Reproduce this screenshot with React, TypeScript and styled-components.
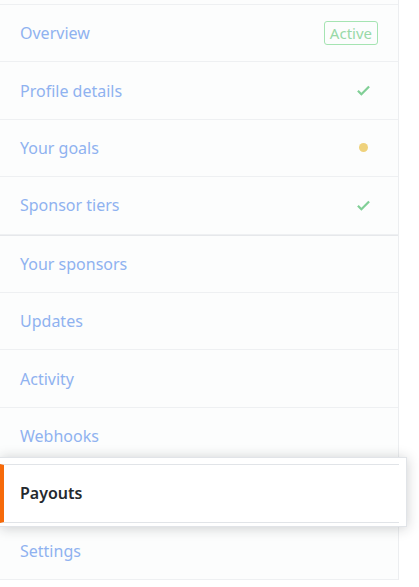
import React from 'react';
import styled, { createGlobalStyle } from 'styled-components';

const GlobalStyle = createGlobalStyle`
  html, body {
    margin: 0;
    padding: 0;
    background: #ffffff;
  }
  body {
    font-family: "Noto Sans", "Open Sans", sans-serif;
  }
`;

const Page = styled.div`
  width: 419px;
  height: 587px;
  overflow: hidden;
  background: #ffffff;
`;

const Nav = styled.nav`
  width: 398px;
  padding-top: 4px;
  background: #fcfdfd;
  border-right: 1px solid #eceef0;
`;

const Group = styled.div<{ $heavy?: boolean }>`
  display: flex;
  flex-direction: column;
  border-top: 1px solid ${(p) => (p.$heavy ? '#e6e8eb' : '#eef0f2')};
`;

const Item = styled.div<{ $selected?: boolean }>`
  position: relative;
  display: flex;
  align-items: center;
  justify-content: space-between;
  height: 56.4px;
  padding: 0 20px;
  border-bottom: 1px solid #eef0f2;
  font-size: 16px;
  color: ${(p) => (p.$selected ? '#24292e' : '#8fb2f0')};
  font-weight: ${(p) => (p.$selected ? 600 : 400)};
  z-index: ${(p) => (p.$selected ? 2 : 'auto')};

  ${(p) =>
    p.$selected &&
    `
    border-bottom-color: #e1e4e8;
    &::before {
      content: '';
      position: absolute;
      left: 0;
      right: -9px;
      top: -8px;
      bottom: -5px;
      background: #ffffff;
      border: 1px solid #e1e4e8;
      border-left: none;
      box-shadow: 0 1px 12px rgba(27, 31, 35, 0.22);
      z-index: -1;
    }
    &::after {
      content: '';
      position: absolute;
      left: 0;
      right: -1px;
      top: -1px;
      bottom: -1px;
      border-top: 1px solid #e1e4e8;
      border-bottom: 1px solid #e1e4e8;
      border-left: 4px solid #f66a0a;
      z-index: -1;
    }
  `}
`;

const Label = styled.span`
  position: relative;
`;

const Status = styled.span`
  display: flex;
  align-items: center;
  justify-content: center;
  min-width: 30px;
`;

const Badge = styled.span`
  display: inline-block;
  padding: 0 5px;
  font-size: 15px;
  line-height: 22px;
  color: #98d9a7;
  border: 1px solid #a5e4b2;
  border-radius: 3px;
`;

const Dot = styled.span`
  display: block;
  width: 9px;
  height: 9px;
  border-radius: 50%;
  background: #efd27c;
`;

const Check = () => (
  <svg width="15" height="17" viewBox="0 0 12 16" fill="#80cf96">
    <path d="M12 5l-8 8-4-4 1.5-1.5L4 10l6.5-6.5L12 5z" />
  </svg>
);

type Entry = { label: string; status?: 'active' | 'done' | 'pending'; selected?: boolean };

const setup: Entry[] = [
  { label: 'Overview', status: 'active' },
  { label: 'Profile details', status: 'done' },
  { label: 'Your goals', status: 'pending' },
  { label: 'Sponsor tiers', status: 'done' },
];

const manage: Entry[] = [
  { label: 'Your sponsors' },
  { label: 'Updates' },
  { label: 'Activity' },
  { label: 'Webhooks' },
  { label: 'Payouts', selected: true },
  { label: 'Settings' },
];

const renderStatus = (status?: Entry['status']) => {
  if (status === 'active') return <Badge>Active</Badge>;
  if (status === 'done') return <Status><Check /></Status>;
  if (status === 'pending') return <Status><Dot /></Status>;
  return null;
};

const App: React.FC = () => {
  return (
    <Page>
      <GlobalStyle />
      <Nav>
        <Group>
          {setup.map((e) => (
            <Item key={e.label}>
              <Label>{e.label}</Label>
              {renderStatus(e.status)}
            </Item>
          ))}
        </Group>
        <Group $heavy>
          {manage.map((e) => (
            <Item key={e.label} $selected={e.selected}>
              <Label>{e.label}</Label>
            </Item>
          ))}
        </Group>
      </Nav>
    </Page>
  );
};

export default App;
